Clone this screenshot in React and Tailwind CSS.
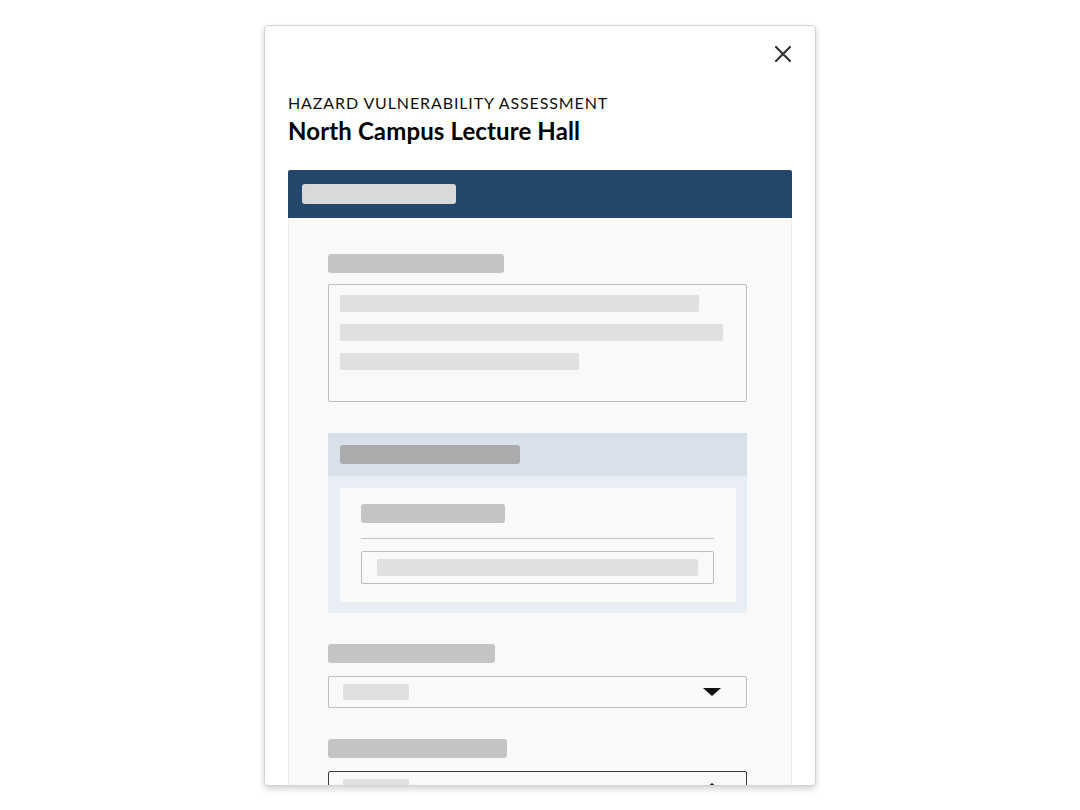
export default function App() {
  return (
    <div className="min-h-[810px] bg-white flex justify-center pt-[25px]" style={{ fontFamily: 'Lato, "Open Sans", sans-serif' }}>
      <div className="relative w-[552px] h-[761px] overflow-hidden bg-white border border-[#d4d4d4] rounded-[4px] shadow-[0_3px_6px_rgba(0,0,0,0.18)] px-[23px] pt-[67px]">
        {/* close */}
        <button className="absolute right-[22px] top-[18px] w-[20px] h-[20px] flex items-center justify-center">
          <svg width="18" height="18" viewBox="0 0 18 18" fill="none" stroke="#333" strokeWidth="2.2" strokeLinecap="round">
            <path d="M2 2 L16 16 M16 2 L2 16" />
          </svg>
        </button>

        <div className="text-[16px] leading-[20px] tracking-[0.055em] text-[#111]">HAZARD VULNERABILITY ASSESSMENT</div>
        <div className="mt-[3px] text-[24px] leading-[30px] font-bold text-black tracking-[0.005em]">North Campus Lecture Hall</div>

        {/* card */}
        <div className="mt-[24px]">
          <div className="h-[48px] bg-[#24486c] rounded-t-[2px] flex items-center pl-[14px]">
            <div className="w-[154px] h-[20px] rounded-[3px] bg-[#d9d9d9]" />
          </div>
          <div className="bg-[#f9f9f9] border-x border-[#ececec] pl-[39px] pr-[44px] pt-[36px] pb-[40px]">
            {/* field 1: textarea */}
            <div className="w-[176px] h-[19px] rounded-[3px] bg-[#c4c4c4]" />
            <div className="mt-[11px] h-[118px] border border-[#bdbdbd] rounded-[2px] pl-[11px] pt-[10px] flex flex-col gap-[12px]">
              <div className="w-[359px] h-[17px] rounded-[2px] bg-[#e0e0e0]" />
              <div className="w-[383px] h-[17px] rounded-[2px] bg-[#e0e0e0]" />
              <div className="w-[239px] h-[17px] rounded-[2px] bg-[#e0e0e0]" />
            </div>

            {/* group section */}
            <div className="mt-[31px] bg-[#e9eef4]">
              <div className="h-[43px] bg-[#d8e1ea] flex items-center pl-[12px]">
                <div className="w-[180px] h-[19px] rounded-[3px] bg-[#ababab]" />
              </div>
              <div className="p-[12px] pr-[11px] pb-[11px]">
                <div className="bg-[#f9f9f9] pl-[21px] pr-[22px] pt-[16px] pb-[18px]">
                  <div className="w-[144px] h-[19px] rounded-[3px] bg-[#c4c4c4]" />
                  <div className="mt-[15px] h-px bg-[#c4c4c4]" />
                  <div className="mt-[12px] h-[33px] border border-[#bdbdbd] rounded-[2px] flex items-center pl-[15px] pr-[15px]">
                    <div className="w-full h-[17px] rounded-[2px] bg-[#e0e0e0]" />
                  </div>
                </div>
              </div>
            </div>

            {/* select 1 */}
            <div className="mt-[31px] w-[167px] h-[19px] rounded-[3px] bg-[#c4c4c4]" />
            <div className="mt-[13px] h-[32px] border border-[#bdbdbd] rounded-[2px] flex items-center justify-between pl-[14px] pr-[25px]">
              <div className="w-[66px] h-[16px] rounded-[2px] bg-[#e0e0e0]" />
              <svg width="18" height="8" viewBox="0 0 18 8"><path d="M0 0 H18 L9 8 Z" fill="#111" /></svg>
            </div>

            {/* select 2 (open) */}
            <div className="mt-[31px] w-[179px] h-[19px] rounded-[3px] bg-[#c4c4c4]" />
            <div className="mt-[13px] h-[32px] border-[1.5px] border-[#3a3a3a] rounded-[2px] flex items-center justify-between pl-[14px] pr-[25px]">
              <div className="w-[66px] h-[16px] rounded-[2px] bg-[#e0e0e0]" />
              <svg width="18" height="8" viewBox="0 0 18 8"><path d="M0 8 H18 L9 0 Z" fill="#111" /></svg>
            </div>
          </div>
        </div>
      </div>
    </div>
  );
}
